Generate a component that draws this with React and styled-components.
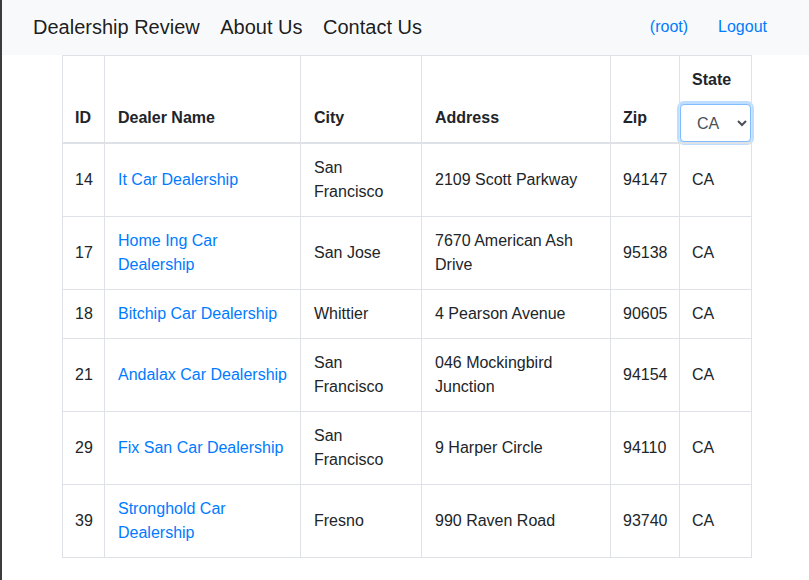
import React from 'react';
import styled, { createGlobalStyle } from 'styled-components';

const GlobalStyle = createGlobalStyle`
    body {
        margin: 0;
        font-family: "Liberation Sans", Arial, sans-serif;
        font-size: 16px;
        line-height: 1.5;
        color: #212529;
        background: #fff;
    }
`

const dealers = [
    { id: 14, name: 'It Car Dealership', city: 'San Francisco', address: '2109 Scott Parkway', zip: '94147', st: 'CA' },
    { id: 17, name: 'Home Ing Car Dealership', city: 'San Jose', address: '7670 American Ash Drive', zip: '95138', st: 'CA' },
    { id: 18, name: 'Bitchip Car Dealership', city: 'Whittier', address: '4 Pearson Avenue', zip: '90605', st: 'CA' },
    { id: 21, name: 'Andalax Car Dealership', city: 'San Francisco', address: '046 Mockingbird Junction', zip: '94154', st: 'CA' },
    { id: 29, name: 'Fix San Car Dealership', city: 'San Francisco', address: '9 Harper Circle', zip: '94110', st: 'CA' },
    { id: 39, name: 'Stronghold Car Dealership', city: 'Fresno', address: '990 Raven Road', zip: '93740', st: 'CA' },
]

export default function App() {
    return (
        <Page>
            <GlobalStyle />
            <Navbar>
                <NavGroup>
                    <Brand>Dealership Review</Brand>
                    <Brand>About Us</Brand>
                    <Brand>Contact Us</Brand>
                </NavGroup>
                <NavGroup $right>
                    <NavLink href="#">(root)</NavLink>
                    <NavLink href="#">Logout</NavLink>
                </NavGroup>
            </Navbar>

            <TableWrap>
                <Table>
                    <colgroup>
                        <col style={{ width: 42 }} />
                        <col style={{ width: 196 }} />
                        <col style={{ width: 121 }} />
                        <col style={{ width: 189 }} />
                        <col style={{ width: 69 }} />
                        <col style={{ width: 72 }} />
                    </colgroup>
                    <thead>
                        <tr>
                            <Th $tight>ID</Th>
                            <Th>Dealer Name</Th>
                            <Th>City</Th>
                            <Th>Address</Th>
                            <Th $tight>Zip</Th>
                            <StateTh>
                                <StateLabel>State</StateLabel>
                                <StateSelect defaultValue="CA">
                                    <option value="CA">CA</option>
                                    <option value="All">All States</option>
                                </StateSelect>
                            </StateTh>
                        </tr>
                    </thead>
                    <tbody>
                        {dealers.map((d) => (
                            <tr key={d.id}>
                                <Td $tight>{d.id}</Td>
                                <Td><DealerLink href="#">{d.name}</DealerLink></Td>
                                <Td>{d.city}</Td>
                                <Td>{d.address}</Td>
                                <Td $tight>{d.zip}</Td>
                                <Td $tight>{d.st}</Td>
                            </tr>
                        ))}
                    </tbody>
                </Table>
            </TableWrap>
        </Page>
    );
}

const Page = styled.div`
    min-height: 100vh;
    border-left: 2px solid #3c3c3c;
    box-sizing: border-box;
`

const Navbar = styled.nav`
    height: 55px;
    box-sizing: border-box;
    background-color: #f8f9fa;
    display: flex;
    align-items: center;
    justify-content: space-between;
    padding: 0 42px 2px 31px;
`

const NavGroup = styled.div`
    display: flex;
    align-items: center;
    gap: ${(p) => (p.$right ? '30px' : '20.5px')};
`

const Brand = styled.span`
    font-size: 20px;
    line-height: 30px;
    color: rgba(0, 0, 0, 0.9);
`

const NavLink = styled.a`
    font-size: 16px;
    color: #007bff;
    text-decoration: none;
`

const TableWrap = styled.div`
    padding-left: 60px;
`

const Table = styled.table`
    width: 689px;
    table-layout: fixed;
    border-collapse: collapse;
    border: 1px solid #dee2e6;
`

const Th = styled.th`
    text-align: left;
    vertical-align: bottom;
    padding: 12px;
    padding-left: ${(p) => (p.$tight ? '12px' : '13px')};
    font-weight: 700;
    border: 1px solid #dee2e6;
    border-bottom-width: 2px;
`

const StateTh = styled(Th)`
    padding: 12px 0 0 0;
`

const StateLabel = styled.div`
    padding: 0 12px;
`

const StateSelect = styled.select`
    display: block;
    width: 100%;
    height: 38px;
    margin-top: 12px;
    padding: 6px 8px 6px 12px;
    font-family: inherit;
    font-size: 16px;
    color: #495057;
    background-color: #fff;
    border: 1px solid #80bdff;
    border-radius: 4px;
    box-shadow: 0 0 0 3px rgba(0, 123, 255, 0.25);
    outline: none;
`

const Td = styled.td`
    padding: 12px;
    padding-left: ${(p) => (p.$tight ? '12px' : '13px')};
    vertical-align: middle;
    border: 1px solid #dee2e6;
`

const DealerLink = styled.a`
    color: #007bff;
    text-decoration: none;
`
